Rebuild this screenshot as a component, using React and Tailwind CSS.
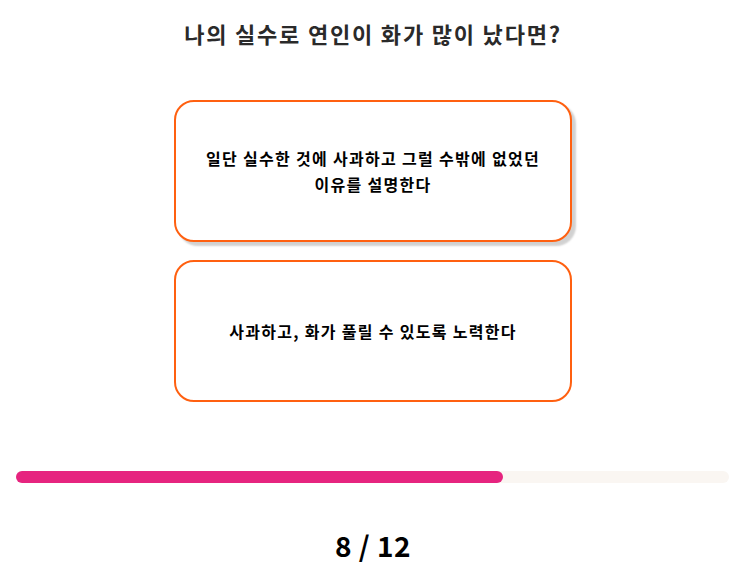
import React from "react";

export default function App() {
  const font = { fontFamily: '"Noto Sans CJK KR", "Noto Sans", sans-serif' };
  return (
    <div className="w-[746px] h-[585px] bg-white flex flex-col items-center" style={font}>
      <h1 className="mt-[18px] text-[22px] leading-[30px] font-bold tracking-[1.8px] text-[#2a2a2a]">
        나의 실수로 연인이 화가 많이 났다면?
      </h1>
      <div className="mt-[52px] flex flex-col gap-[18px]">
        <div className="w-[398px] h-[142px] rounded-[20px] border-2 border-[#ff6010] bg-white shadow-[4px_4px_2px_rgba(0,0,0,0.18)] flex items-center justify-center px-4 text-center text-[16px] leading-[26px] font-bold tracking-[1.3px] text-black">
          일단 실수한 것에 사과하고 그럴 수밖에 없었던<br />이유를 설명한다
        </div>
        <div className="w-[398px] h-[142px] rounded-[20px] border-2 border-[#ff6010] bg-white flex items-center justify-center px-4 text-center text-[16px] leading-[26px] font-bold tracking-[1.3px] text-black">
          사과하고, 화가 풀릴 수 있도록 노력한다
        </div>
      </div>
      <div className="mt-[69px] w-[713px] h-[12px] rounded-full bg-[#faf6f2] self-start ml-[16px]">
        <div className="h-full rounded-full bg-[#e6247f]" style={{ width: "68.3%" }} />
      </div>
      <div className="mt-[44px] text-[28px] leading-[36px] font-bold tracking-[0.5px] text-black">8 / 12</div>
    </div>
  );
}
